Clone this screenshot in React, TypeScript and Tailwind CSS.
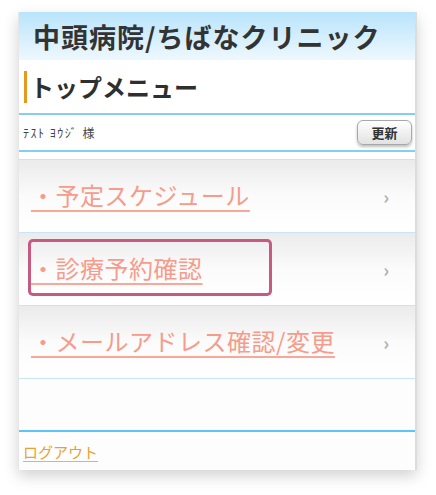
const jp = { fontFamily: '"Noto Sans CJK JP", "Noto Sans", sans-serif' };

const menuItems = [
  { label: "・予定スケジュール", focused: false },
  { label: "・診療予約確認", focused: true },
  { label: "・メールアドレス確認/変更", focused: false },
];

function MenuRow({ label, focused }: { label: string; focused: boolean }) {
  return (
    <div className="flex h-[73px] items-start justify-between border-b border-[#c6e5f7] bg-gradient-to-b from-[#ebebeb] via-[#fbfbfb] to-white pl-[12px] pr-[26px]">
      <a
        href="#"
        className={
          "mt-[9px] flex h-[51px] w-[238px] shrink-0 items-center text-[24px] leading-none tracking-[0.5px] whitespace-nowrap text-[#f79b8b] underline decoration-[#f7a898] decoration-2 underline-offset-[5px]" +
          (focused ? " rounded-[2px] ring-[3px] ring-[#c75a80]" : "")
        }
      >
        {label}
      </a>
      <span className="mt-[27px] text-[18px] font-bold leading-none text-[#b0b0b0]">›</span>
    </div>
  );
}

export default function App() {
  return (
    <div className="min-h-[495px] w-[436px] bg-white pl-[18px] pt-[12px]" style={jp}>
      <div className="flex h-[458px] w-[399px] flex-col border-l border-r-2 border-l-[#e6e6e6] border-r-[#dcdcdc] bg-[#fdfdfd] shadow-[0_6px_14px_rgba(0,0,0,0.18)]">
        <header className="flex h-[48px] shrink-0 items-center bg-gradient-to-b from-[#b9e4fb] to-[#eef8fe] pl-[14px]">
          <h1 className="text-[27px] font-bold leading-none tracking-[1px] whitespace-nowrap text-[#333333]">
            中頭病院/ちばなクリニック
          </h1>
        </header>

        <div className="flex h-[55px] shrink-0 items-center border-b-2 border-[#86cdf3] bg-white pl-[5px]">
          <span className="h-[32px] w-[3px] bg-[#e39a1f]" />
          <h2 className="ml-[3px] text-[24px] font-bold leading-none text-[#2f2f2f]">トップメニュー</h2>
        </div>

        <div className="flex h-[37px] shrink-0 items-center justify-between border-b-2 border-[#86cdf3] bg-white pl-[4px] pr-[3px]">
          <span className="text-[12px] tracking-[1.5px] text-[#444444]">ﾃｽﾄ ﾖｳｼﾞ 様</span>
          <button className="h-[25px] w-[55px] rounded-[6px] border border-[#a8a8a8] bg-gradient-to-b from-white to-[#e2e2e2] text-[13px] font-bold leading-none text-[#333333] shadow-[0_2px_3px_rgba(0,0,0,0.25)]">
            更新
          </button>
        </div>

        <div className="h-[8px] shrink-0 border-b border-[#c6e5f7] bg-white" />

        {menuItems.map((item) => (
          <MenuRow key={item.label} label={item.label} focused={item.focused} />
        ))}

        <div className="h-[53px] shrink-0 border-b-2 border-[#5cc5f8] bg-[#fdfdfd]" />

        <div className="flex flex-1 items-center pl-[4px]">
          <a
            href="#"
            className="text-[15px] leading-none text-[#e7a232] underline decoration-[#eab35a] underline-offset-[3px]"
          >
            ログアウト
          </a>
        </div>
      </div>
    </div>
  );
}
